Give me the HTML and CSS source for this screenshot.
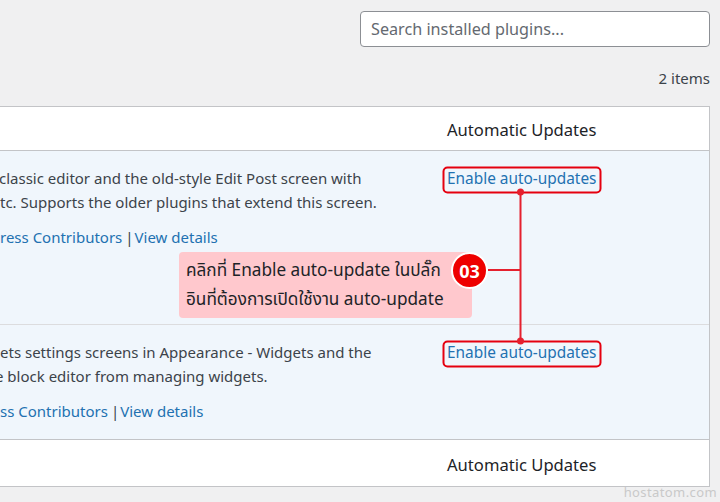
FILE: index.html
```html
<!DOCTYPE html>
<html lang="en">
<head>
<meta charset="utf-8">
<title>Plugins</title>
<link rel="stylesheet" href="styles.css">
</head>
<body>
<div class="page">
  <div class="search-row">
    <input class="search" type="search" placeholder="Search installed plugins...">
  </div>
  <div class="count">2 items</div>
  <div class="table">
    <div class="row head">
      <div class="c-desc"></div>
      <div class="c-auto">Automatic Updates</div>
    </div>
    <div class="row plugin first">
      <div class="c-desc">
        <div class="line cut1">classic editor and the old-style Edit Post screen with</div>
        <div class="line cut0">tc. Supports the older plugins that extend this screen.</div>
        <div class="meta cut0"><a href="#">ress Contributors</a><span class="sep">|</span><a href="#">View details</a></div>
      </div>
      <div class="c-auto"><a href="#" class="auto">Enable auto-updates</a></div>
    </div>
    <div class="row plugin second">
      <div class="c-desc">
        <div class="line cut0">ets settings screens in Appearance - Widgets and the</div>
        <div class="line cutE">e block editor from managing widgets.</div>
        <div class="meta cut0"><a href="#">ss Contributors</a><span class="sep">|</span><a href="#">View details</a></div>
      </div>
      <div class="c-auto"><a href="#" class="auto">Enable auto-updates</a></div>
    </div>
    <div class="row foot">
      <div class="c-desc"></div>
      <div class="c-auto">Automatic Updates</div>
    </div>
  </div>
  <div class="watermark">hostatom.com</div>

  <svg class="marks" width="720" height="502" viewBox="0 0 720 502" aria-hidden="true">
    <rect x="443.5" y="167.5" width="157" height="25" rx="4" ry="4" fill="none" stroke="#e5000f" stroke-width="2"/>
    <rect x="443.5" y="341.5" width="157" height="25" rx="4" ry="4" fill="none" stroke="#e5000f" stroke-width="2"/>
    <line x1="520.5" y1="192" x2="520.5" y2="341" stroke="#e5202e" stroke-width="2"/>
    <line x1="488" y1="270" x2="520.5" y2="270" stroke="#e5202e" stroke-width="2"/>
    <circle cx="520.5" cy="192" r="3.5" fill="#e5202e"/>
    <circle cx="520.5" cy="341" r="3.5" fill="#e5202e"/>
  </svg>

  <div class="callout">
    <div class="callout-text">คลิกที่ Enable auto-update ในปลั๊ก<br>อินที่ต้องการเปิดใช้งาน auto-update</div>
    <div class="badge">03</div>
  </div>
</div>
</body>
</html>
```
FILE: styles.css
```css
html, body {
  margin: 0;
  padding: 0;
  background: #f0f0f1;
}
body {
  width: 720px;
  height: 502px;
  overflow: hidden;
  font-family: "Noto Sans", "Noto Sans Thai", sans-serif;
  color: #3c434a;
}
.page {
  position: relative;
  width: 720px;
  height: 502px;
  padding-right: 10px;
  box-sizing: border-box;
}
.search-row {
  display: flex;
  justify-content: flex-end;
  padding-top: 11px;
}
.search {
  width: 350px;
  height: 36px;
  box-sizing: border-box;
  border: 1px solid #8c8f94;
  border-radius: 4px;
  background: #fff;
  padding: 0 10px;
  font-family: "Noto Sans", sans-serif;
  font-size: 16.2px;
  color: #2c3338;
  outline: none;
}
.search::placeholder {
  color: #646970;
}
.count {
  text-align: right;
  font-size: 15px;
  line-height: 20px;
  margin-top: 21px;
  color: #3c434a;
}
.table {
  margin-top: 18px;
  border: 1px solid #c3c4c7;
  border-left: none;
  background: #fff;
}
.row {
  display: grid;
  grid-template-columns: 1fr 272px;
}
.c-auto {
  padding-left: 10px;
}
.head, .foot {
  height: 44px;
  align-items: center;
  color: #1d2327;
  font-size: 16.6px;
}
.head {
  border-bottom: 1px solid #c3c4c7;
  padding-top: 1px;
  box-sizing: border-box;
}
.foot {
  border-top: 1px solid #c3c4c7;
  height: 47px;
  padding-top: 2px;
  box-sizing: border-box;
}
.plugin {
  background: #f0f6fc;
  font-size: 15px;
  line-height: 24px;
}
.first {
  height: 174px;
  padding-top: 15px;
  box-sizing: border-box;
  border-bottom: 1px solid #dcdcde;
}
.second {
  height: 114px;
  padding-top: 15px;
  box-sizing: border-box;
}
.line {
  white-space: nowrap;
}
.meta {
  white-space: nowrap;
  margin-top: 11px;
}
.cut0 { margin-left: 0; }
.cut1 { margin-left: -1px; }
.cutE { margin-left: -5px; }
a {
  color: #2271b1;
  text-decoration: none;
}
.auto {
  font-size: 15.4px;
}
.sep {
  color: #3c434a;
  margin: 0 1px 0 3px;
}
.watermark {
  position: absolute;
  right: 3px;
  bottom: 1px;
  font-size: 13px;
  letter-spacing: 0.4px;
  color: #c9c9c9;
}
.marks {
  position: absolute;
  left: 0;
  top: 0;
  pointer-events: none;
}
.callout {
  position: absolute;
  left: 179px;
  top: 252px;
  width: 293px;
  height: 66px;
  background: #ffc8cd;
  border-radius: 4px;
}
.callout-text {
  padding: 3px 0 0 7px;
  font-family: "Noto Sans", "Noto Sans Thai", "DejaVu Sans", sans-serif;
  font-size: 17.2px;
  line-height: 29px;
  color: #1d2327;
  white-space: nowrap;
}
.badge {
  position: absolute;
  left: 272px;
  top: 0px;
  width: 33px;
  height: 33px;
  border-radius: 50%;
  background: #ee0000;
  border: 2px solid #fff;
  color: #fff;
  font-family: "Open Sans", "Noto Sans", sans-serif;
  font-weight: 700;
  font-size: 18px;
  display: flex;
  align-items: center;
  justify-content: center;
}
```
